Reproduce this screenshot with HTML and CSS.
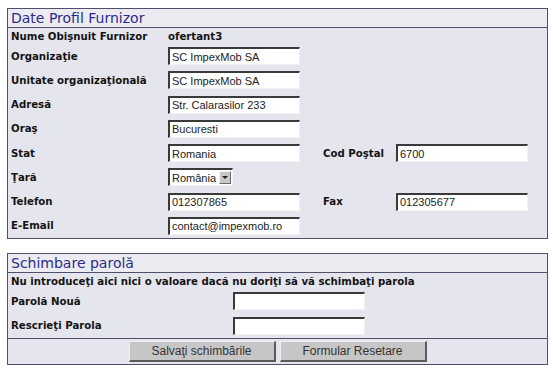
FILE: index.html
```html
<!DOCTYPE html>
<html lang="ro">
<head>
<meta charset="utf-8">
<title>Date Profil Furnizor</title>
<link rel="stylesheet" href="styles.css">
</head>
<body>
<section class="panel">
  <h2 class="panel-title">Date Profil Furnizor</h2>
  <div class="profile-grid">
    <div class="lbl">Nume Obişnuit Furnizor</div>
    <div class="val span3">ofertant3</div>

    <div class="lbl">Organizaţie</div>
    <div class="span3"><input class="field" type="text" value="SC ImpexMob SA"></div>

    <div class="lbl">Unitate organizaţională</div>
    <div class="span3"><input class="field" type="text" value="SC ImpexMob SA"></div>

    <div class="lbl">Adresă</div>
    <div class="span3"><input class="field" type="text" value="Str. Calarasilor 233"></div>

    <div class="lbl">Oraş</div>
    <div class="span3"><input class="field" type="text" value="Bucuresti"></div>

    <div class="lbl">Stat</div>
    <div><input class="field" type="text" value="Romania"></div>
    <div class="lbl lbl2">Cod Poştal</div>
    <div><input class="field" type="text" value="6700"></div>

    <div class="lbl">Ţară</div>
    <div class="span3">
      <div class="select"><span class="select-text">România</span><span class="select-arrow"></span></div>
    </div>

    <div class="lbl">Telefon</div>
    <div><input class="field" type="text" value="012307865"></div>
    <div class="lbl lbl2">Fax</div>
    <div><input class="field" type="text" value="012305677"></div>

    <div class="lbl">E-Email</div>
    <div class="span3"><input class="field" type="text" value="contact@impexmob.ro"></div>
  </div>
</section>

<section class="panel">
  <h2 class="panel-title">Schimbare parolă</h2>
  <div class="password-grid">
    <div class="lbl note">Nu introduceţi aici nici o valoare dacă nu doriţi să vă schimbaţi parola</div>
    <div class="lbl">Parolă Nouă</div>
    <div><input class="field" type="password"></div>
    <div class="lbl">Rescrieţi Parola</div>
    <div><input class="field" type="password"></div>
  </div>
  <div class="actions">
    <button class="btn" type="button">Salvaţi schimbările</button>
    <button class="btn" type="button">Formular Resetare</button>
  </div>
</section>
</body>
</html>
```

FILE: styles.css
```css
body {
  margin: 0;
  padding: 8px 6px 0 7px;
  background: #ffffff;
  font-family: "DejaVu Sans", Verdana, sans-serif;
}

.panel {
  width: 541px;
  box-sizing: border-box;
  border: 1px solid #50506e;
  background: #e5e5ed;
}

.panel + .panel {
  margin-top: 14px;
}

.panel-title {
  margin: 0;
  height: 18px;
  line-height: 18px;
  padding-left: 3px;
  font-size: 14px;
  font-weight: normal;
  color: #2b2b8c;
  background: #ebebf1;
  border-bottom: 1px solid #50506e;
}

.profile-grid {
  display: grid;
  grid-template-columns: 160px 155px 73px 132px;
  grid-template-rows: 16px repeat(8, 24.25px);
  align-items: center;
}

.password-grid {
  display: grid;
  grid-template-columns: 225px 133px;
  grid-template-rows: 16px 24.5px 24.5px;
  align-items: center;
}

.span3 {
  grid-column: span 3;
}

.note {
  grid-column: 1 / -1;
  white-space: nowrap;
}

.lbl {
  padding-left: 3px;
  font-size: 10.2px;
  font-weight: bold;
  color: #141414;
  white-space: nowrap;
}

.lbl2 {
  padding-left: 0;
}

.val {
  font-size: 10.2px;
  font-weight: bold;
  color: #141414;
}

.field {
  display: block;
  width: 132px;
  height: 18px;
  box-sizing: border-box;
  margin: 0;
  padding: 0 2px;
  border-style: solid;
  border-width: 2px 1px 1px 2px;
  border-color: #3a3a3a #f2f2f2 #f2f2f2 #3a3a3a;
  background: #ffffff;
  font-family: "Liberation Sans", Arial, sans-serif;
  font-size: 11px;
  color: #222;
  outline: none;
}

.select {
  display: flex;
  align-items: center;
  width: 65px;
  height: 18px;
  box-sizing: border-box;
  border-style: solid;
  border-width: 2px 1px 1px 2px;
  border-color: #3a3a3a #f2f2f2 #f2f2f2 #3a3a3a;
  background: #ffffff;
  font-family: "Liberation Sans", Arial, sans-serif;
  font-size: 11px;
  color: #222;
}

.select-text {
  flex: 1;
  padding-left: 2px;
}

.select-arrow {
  position: relative;
  width: 12px;
  height: 13px;
  margin-right: 1px;
  box-sizing: border-box;
  background: #c8c8c8;
  border-style: solid;
  border-width: 1px;
  border-color: #f4f4f4 #6a6a6a #6a6a6a #f4f4f4;
}

.select-arrow::after {
  content: "";
  position: absolute;
  left: 2px;
  top: 4px;
  border-style: solid;
  border-width: 3px 3px 0 3px;
  border-color: #222 transparent transparent transparent;
}

.actions {
  display: flex;
  justify-content: center;
  align-items: center;
  gap: 4px;
  height: 25px;
  border-top: 1px solid #50506e;
}

.btn {
  width: 147px;
  height: 21px;
  margin: 0;
  padding: 0;
  box-sizing: border-box;
  border-style: solid;
  border-width: 1px 2px 2px 1px;
  border-color: #f0f0f0 #5a5a5a #5a5a5a #f0f0f0;
  background: #c6c6c6;
  font-family: "Liberation Sans", Arial, sans-serif;
  font-size: 12px;
  color: #333;
}
```
